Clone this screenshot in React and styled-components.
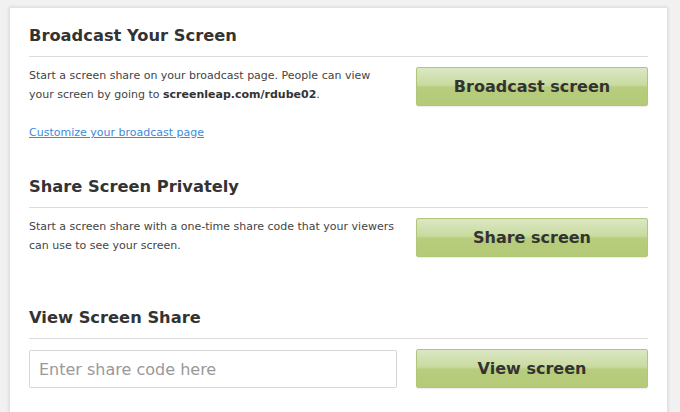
import styled, { createGlobalStyle } from "styled-components";

const GlobalStyle = createGlobalStyle`
  body {
    margin: 0;
    background: #f1f1f1;
    font-family: "DejaVu Sans", Verdana, sans-serif;
  }
`;

const App = () => {
  return (
    <>
      <GlobalStyle />
      <Card>
        <Section $after={33}>
          <Heading>Broadcast Your Screen</Heading>
          <Row>
            <TextColumn>
              <Text>
                Start a screen share on your broadcast page. People can view
                your screen by going to <strong>screenleap.com/rdube02</strong>.
              </Text>
              <Link href="#">Customize your broadcast page</Link>
            </TextColumn>
            <Button>Broadcast screen</Button>
          </Row>
        </Section>
        <Section $after={49}>
          <Heading>Share Screen Privately</Heading>
          <Row>
            <TextColumn>
              <Text>
                Start a screen share with a one-time share code that your viewers
                can use to see your screen.
              </Text>
            </TextColumn>
            <Button>Share screen</Button>
          </Row>
        </Section>
        <Section $after={0}>
          <Heading>View Screen Share</Heading>
          <Row>
            <CodeInput placeholder="Enter share code here" />
            <Button>View screen</Button>
          </Row>
        </Section>
      </Card>
    </>
  );
};

export default App;

const Card = styled.div`
  margin: 7px 0 0 9px;
  width: 619px;
  padding: 16px 19px 40px;
  background: #fff;
  border: 1px solid #e2e2e2;
  box-shadow: 0 0 3px rgba(0, 0, 0, 0.12);
`;
const Section = styled.section`
  margin-bottom: ${(p) => p.$after}px;
`;
const Heading = styled.h2`
  margin: 0;
  padding-bottom: 8px;
  border-bottom: 1px solid #dcdcdc;
  font-size: 16.3px;
  line-height: 24px;
  font-weight: bold;
  color: #333;
`;
const Row = styled.div`
  display: grid;
  grid-template-columns: 368px 232px;
  gap: 19px;
  align-items: start;
  margin-top: 10px;
`;
const TextColumn = styled.div`
  display: flex;
  flex-direction: column;
  align-items: flex-start;
`;
const Text = styled.p`
  margin: -1px 0 0;
  font-size: 11px;
  line-height: 19px;
  color: #444;

  strong {
    color: #333;
  }
`;
const Link = styled.a`
  margin-top: 19px;
  font-size: 11px;
  line-height: 19px;
  color: #3d8ad8;
  text-decoration: underline;
`;
const Button = styled.button`
  height: 39px;
  border: 1px solid #b0c67a;
  border-radius: 2px;
  background: linear-gradient(
    to bottom,
    #dbe7c4 0%,
    #c9db9f 46%,
    #b8cd7d 52%,
    #b4ca77 100%
  );
  box-shadow: 0 1px 1px rgba(0, 0, 0, 0.08);
  font-family: "DejaVu Sans", Verdana, sans-serif;
  font-size: 16px;
  font-weight: bold;
  color: #333;
  cursor: pointer;
`;
const CodeInput = styled.input`
  box-sizing: border-box;
  height: 38px;
  margin-top: 1px;
  padding: 0 9px;
  border: 1px solid #d6d6d6;
  border-radius: 2px;
  font-family: "DejaVu Sans", Verdana, sans-serif;
  font-size: 16px;
  color: #333;

  &::placeholder {
    color: #999;
  }
`;
